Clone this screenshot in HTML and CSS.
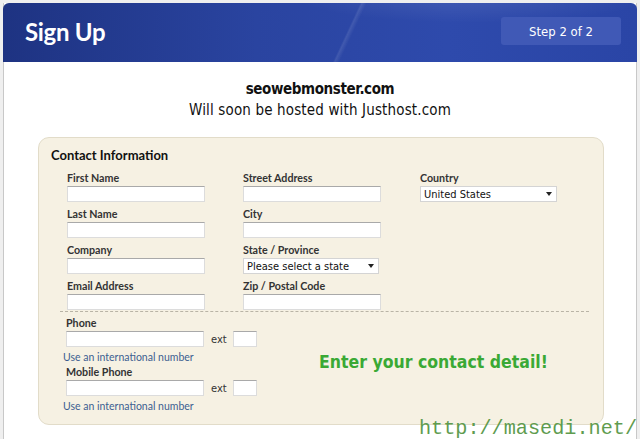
FILE: index.html
```html
<!DOCTYPE html>
<html lang="en">
<head>
<meta charset="utf-8">
<title>Sign Up</title>
<link rel="stylesheet" href="styles.css">
</head>
<body>
<div class="page">
  <header class="head">
    <h1 class="head-title">Sign Up</h1>
    <div class="step">Step 2 of 2</div>
  </header>
  <main class="content">
    <div class="intro">
      <p class="domain">seowebmonster.com</p>
      <p class="hosted">Will soon be hosted with Justhost.com</p>
    </div>
    <section class="box">
      <h2 class="box-title">Contact Information</h2>
      <div class="grid">
        <div class="col">
          <div class="field"><label>First Name</label><span class="input"></span></div>
          <div class="field"><label>Last Name</label><span class="input"></span></div>
          <div class="field"><label>Company</label><span class="input"></span></div>
          <div class="field"><label>Email Address</label><span class="input"></span></div>
        </div>
        <div class="col">
          <div class="field"><label>Street Address</label><span class="input"></span></div>
          <div class="field"><label>City</label><span class="input"></span></div>
          <div class="field"><label>State / Province</label><span class="select state"><span>Please select a state</span><i class="arrow"></i></span></div>
          <div class="field"><label>Zip / Postal Code</label><span class="input"></span></div>
        </div>
        <div class="col">
          <div class="field"><label>Country</label><span class="select country"><span>United States</span><i class="arrow"></i></span></div>
        </div>
      </div>
      <div class="phones">
        <div class="phone-col">
          <div class="phone">
            <label>Phone</label>
            <div class="phone-row"><span class="input"></span><span class="ext">ext</span><span class="input small"></span></div>
            <a class="intl">Use an international number</a>
          </div>
          <div class="phone">
            <label>Mobile Phone</label>
            <div class="phone-row"><span class="input"></span><span class="ext">ext</span><span class="input small"></span></div>
            <a class="intl">Use an international number</a>
          </div>
        </div>
        <p class="promo">Enter your contact detail!</p>
      </div>
    </section>
  </main>
  <div class="watermark">http://masedi.net/</div>
</div>
</body>
</html>
```

FILE: styles.css
```css
html, body {
  margin: 0;
  padding: 0;
}
body {
  background: #efefef;
  font-family: "DejaVu Sans Condensed", "DejaVu Sans", sans-serif;
  color: #222;
  height: 439px;
  overflow: hidden;
}
.page {
  position: relative;
  margin: 3px 3px 0 3px;
  height: 436px;
  background: #fff;
  border-left: 1px solid #c8c8c8;
  border-right: 1px solid #c8c8c8;
}
.head {
  height: 59px;
  border-radius: 6px 6px 0 0;
  background:
    linear-gradient(115deg, transparent 0 54%, rgba(255,255,255,0.10) 54.3%, transparent 55% 100%),
    radial-gradient(ellipse 260px 40px at 470px -8px, rgba(255,255,255,0.10), transparent 70%),
    linear-gradient(90deg, #1e3382 0%, #2a44a0 40%, #2e4aac 70%, #2a45a6 100%);
  display: flex;
  align-items: center;
  justify-content: space-between;
  padding: 0 16px 0 22px;
  margin-left: -1px;
  margin-right: -1px;
}
.head-title {
  margin: 0;
  color: #fff;
  font-family: "Lato", sans-serif;
  font-weight: bold;
  font-size: 24px;
  letter-spacing: -0.3px;
  padding-bottom: 2px;
}
.step {
  width: 120px;
  height: 28px;
  margin-top: -3px;
  background: #4059b6;
  border-radius: 3px;
  color: #fff;
  font-size: 13px;
  display: flex;
  align-items: center;
  justify-content: center;
}
.content {
  padding-top: 17px;
}
.intro {
  text-align: center;
}
.intro p {
  margin: 0;
  color: #111;
  font-family: "DejaVu Sans Condensed", sans-serif;
  font-size: 15px;
  line-height: 21px;
}
.intro .domain {
  font-weight: bold;
  letter-spacing: -0.4px;
}
.intro .hosted {
  letter-spacing: 0.15px;
}
.box {
  margin: 16px 0 0 34px;
  width: 566px;
  height: 288px;
  background: #f6f1e3;
  border: 1px solid #e2dcc9;
  border-radius: 11px;
  box-sizing: border-box;
  padding: 9px 0 0 0;
}
.box-title {
  margin: 0 0 0 12px;
  font-family: "Lato", sans-serif;
  font-size: 13px;
  font-weight: bold;
  color: #111;
  line-height: 16px;
}
.grid {
  display: grid;
  grid-template-columns: 176px 177px 1fr;
  padding-left: 28px;
  margin-top: 8px;
}
.col {
  display: flex;
  flex-direction: column;
  gap: 5px;
}
.field {
  display: flex;
  flex-direction: column;
}
label {
  font-family: "Lato", sans-serif;
  font-size: 10.7px;
  font-weight: bold;
  color: #333;
  line-height: 14px;
  height: 15px;
}
.input {
  display: block;
  width: 138px;
  height: 16px;
  box-sizing: border-box;
  background: #fff;
  border: 1px solid #dcdcdc;
  border-top-color: #a9a9a9;
}
.input.small {
  width: 24px;
}
.select {
  display: flex;
  align-items: center;
  justify-content: space-between;
  height: 16px;
  box-sizing: border-box;
  background: #fff;
  border: 1px solid #d4d4d4;
  font-size: 11px;
  color: #111;
  padding: 0 4px 0 3px;
}
.select.state { width: 136px; }
.select.country { width: 137px; }
.arrow {
  width: 0;
  height: 0;
  border-left: 3px solid transparent;
  border-right: 3px solid transparent;
  border-top: 4px solid #222;
}
.phones {
  margin: 1px 14px 0 21px;
  border-top: 1px dashed #b9b4a6;
  padding: 4px 0 0 3px;
  display: flex;
  align-items: flex-start;
}
.phone-col {
  display: flex;
  flex-direction: column;
  gap: 1px;
  width: 256px;
}
.phone {
  display: flex;
  flex-direction: column;
}
.phone label {
  margin-left: 3px;
}
.phone-row {
  display: flex;
  align-items: center;
  padding-left: 3px;
}
.ext {
  font-size: 11px;
  color: #333;
  margin: 0 6px 0 7px;
}
.intl {
  font-family: "Lato", sans-serif;
  font-size: 10.5px;
  color: #3d5f91;
  line-height: 14px;
  margin-top: 3px;
}
.promo {
  margin: 36px 0 0 0;
  color: #3aa935;
  font-weight: bold;
  font-size: 17.5px;
}
.watermark {
  position: absolute;
  right: -1px;
  bottom: 0px;
  font-family: "Liberation Mono", monospace;
  font-size: 20.2px;
  color: #5f9c4f;
  line-height: 20px;
}
```
